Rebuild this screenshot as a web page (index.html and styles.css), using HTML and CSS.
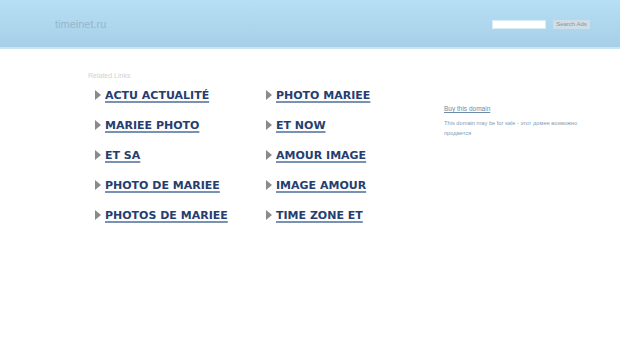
FILE: index.html
```html
<!DOCTYPE html>
<html>
<head>
<meta charset="utf-8">
<link rel="stylesheet" href="styles.css">
</head>
<body>
<div class="header">
  <div class="domain">timeinet.ru</div>
  <div class="search">
    <input class="search-input" type="text">
    <button class="search-btn">Search Ads</button>
  </div>
</div>
<div class="main">
  <div class="links">
    <div class="related">Related Links</div>
    <div class="grid">
      <a class="link" href="#"><span class="arrow"></span><span class="txt">ACTU ACTUALITÉ</span></a>
      <a class="link" href="#"><span class="arrow"></span><span class="txt">PHOTO MARIEE</span></a>
      <a class="link" href="#"><span class="arrow"></span><span class="txt">MARIEE PHOTO</span></a>
      <a class="link" href="#"><span class="arrow"></span><span class="txt">ET NOW</span></a>
      <a class="link" href="#"><span class="arrow"></span><span class="txt">ET SA</span></a>
      <a class="link" href="#"><span class="arrow"></span><span class="txt">AMOUR IMAGE</span></a>
      <a class="link" href="#"><span class="arrow"></span><span class="txt">PHOTO DE MARIEE</span></a>
      <a class="link" href="#"><span class="arrow"></span><span class="txt">IMAGE AMOUR</span></a>
      <a class="link" href="#"><span class="arrow"></span><span class="txt">PHOTOS DE MARIEE</span></a>
      <a class="link" href="#"><span class="arrow"></span><span class="txt">TIME ZONE ET</span></a>
    </div>
  </div>
  <div class="side">
    <a class="buy" href="#">Buy this domain</a>
    <p class="sale">This domain may be for sale - этот домен возможно продается</p>
  </div>
</div>
</body>
</html>
```
FILE: styles.css
```css
html, body {
  margin: 0;
  padding: 0;
  background: #fff;
  font-family: "DejaVu Sans", Verdana, sans-serif;
}
.header {
  height: 47px;
  background: linear-gradient(#b6def4, #a7cfe7);
  border-bottom: 2px solid #c9e5f5;
  display: flex;
  align-items: center;
  justify-content: space-between;
  padding: 0 30px 0 55px;
}
.domain {
  font-family: "Liberation Sans", Arial, sans-serif;
  font-size: 11px;
  color: #98b6cc;
  margin-top: 1px;
}
.search {
  display: flex;
  align-items: center;
  gap: 7px;
  margin-top: 2px;
}
.search-input {
  width: 52px;
  height: 7px;
  border: 1px solid #d8ecf8;
  background: #fff;
  padding: 0;
  margin: 0;
  outline: none;
}
.search-btn {
  height: 9px;
  width: 37px;
  padding: 0;
  margin: 0;
  border: none;
  background: #cfdde6;
  color: #8797a4;
  font-family: "Liberation Sans", Arial, sans-serif;
  font-size: 6px;
  line-height: 9px;
}
.main {
  display: flex;
  padding: 22px 0 0 88px;
}
.links {
  width: 356px;
}
.related {
  font-family: "Liberation Sans", Arial, sans-serif;
  font-size: 7px;
  color: #d2d2d2;
  height: 10px;
  line-height: 10px;
}
.grid {
  display: grid;
  grid-template-columns: 171px 171px;
  grid-auto-rows: 30px;
  padding: 4px 0 0 6px;
}
.link {
  display: flex;
  align-items: center;
  height: 20px;
  text-decoration: none;
}
.arrow {
  width: 0;
  height: 0;
  border-top: 5px solid transparent;
  border-bottom: 5px solid transparent;
  border-left: 6px solid #8a8a8a;
  margin-right: 4px;
  margin-left: 1px;
}
.txt {
  font-weight: bold;
  font-size: 11px;
  color: #253e6f;
  text-decoration: underline;
  text-decoration-color: #7a91b6;
  text-decoration-thickness: 2px;
  text-underline-offset: 2px;
}
.side {
  padding-top: 34px;
}
.buy {
  font-family: "Liberation Sans", Arial, sans-serif;
  font-size: 6.5px;
  color: #6d8cab;
  display: block;
}
.sale {
  font-family: "Liberation Sans", Arial, sans-serif;
  font-size: 5.7px;
  color: #7e9db9;
  width: 150px;
  line-height: 10px;
  margin: 6px 0 0 0;
}
```
